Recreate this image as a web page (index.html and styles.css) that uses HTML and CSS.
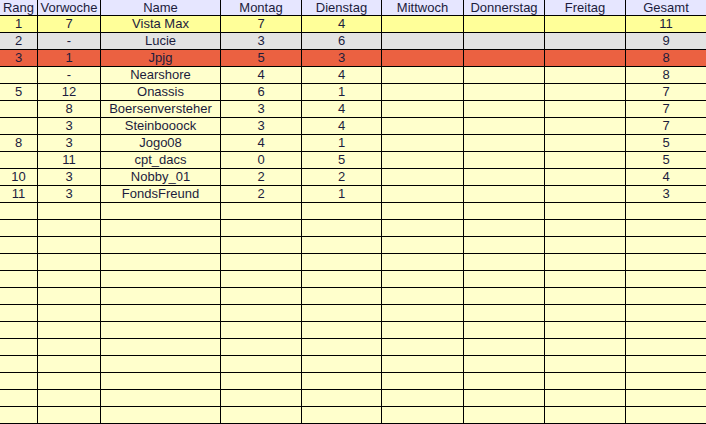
FILE: index.html
```html
<!DOCTYPE html>
<html lang="de">
<head>
<meta charset="utf-8">
<title>Rangliste</title>
<link rel="stylesheet" href="styles.css">
</head>
<body>
<div class="sheet">
  <div class="row head"><div>Rang</div><div>Vorwoche</div><div>Name</div><div>Montag</div><div>Dienstag</div><div>Mittwoch</div><div>Donnerstag</div><div>Freitag</div><div>Gesamt</div></div>
  <div class="row first"><div>1</div><div>7</div><div>Vista Max</div><div>7</div><div>4</div><div></div><div></div><div></div><div>11</div></div>
  <div class="row second"><div>2</div><div>-</div><div>Lucie</div><div>3</div><div>6</div><div></div><div></div><div></div><div>9</div></div>
  <div class="row third"><div>3</div><div>1</div><div>Jpjg</div><div>5</div><div>3</div><div></div><div></div><div></div><div>8</div></div>
  <div class="row"><div></div><div>-</div><div>Nearshore</div><div>4</div><div>4</div><div></div><div></div><div></div><div>8</div></div>
  <div class="row"><div>5</div><div>12</div><div>Onassis</div><div>6</div><div>1</div><div></div><div></div><div></div><div>7</div></div>
  <div class="row"><div></div><div>8</div><div>Boersenversteher</div><div>3</div><div>4</div><div></div><div></div><div></div><div>7</div></div>
  <div class="row"><div></div><div>3</div><div>Steinbooock</div><div>3</div><div>4</div><div></div><div></div><div></div><div>7</div></div>
  <div class="row"><div>8</div><div>3</div><div>Jogo08</div><div>4</div><div>1</div><div></div><div></div><div></div><div>5</div></div>
  <div class="row"><div></div><div>11</div><div>cpt_dacs</div><div>0</div><div>5</div><div></div><div></div><div></div><div>5</div></div>
  <div class="row"><div>10</div><div>3</div><div>Nobby_01</div><div>2</div><div>2</div><div></div><div></div><div></div><div>4</div></div>
  <div class="row"><div>11</div><div>3</div><div>FondsFreund</div><div>2</div><div>1</div><div></div><div></div><div></div><div>3</div></div>
  <div class="row"><div></div><div></div><div></div><div></div><div></div><div></div><div></div><div></div><div></div></div>
  <div class="row"><div></div><div></div><div></div><div></div><div></div><div></div><div></div><div></div><div></div></div>
  <div class="row"><div></div><div></div><div></div><div></div><div></div><div></div><div></div><div></div><div></div></div>
  <div class="row"><div></div><div></div><div></div><div></div><div></div><div></div><div></div><div></div><div></div></div>
  <div class="row"><div></div><div></div><div></div><div></div><div></div><div></div><div></div><div></div><div></div></div>
  <div class="row"><div></div><div></div><div></div><div></div><div></div><div></div><div></div><div></div><div></div></div>
  <div class="row"><div></div><div></div><div></div><div></div><div></div><div></div><div></div><div></div><div></div></div>
  <div class="row"><div></div><div></div><div></div><div></div><div></div><div></div><div></div><div></div><div></div></div>
  <div class="row"><div></div><div></div><div></div><div></div><div></div><div></div><div></div><div></div><div></div></div>
  <div class="row"><div></div><div></div><div></div><div></div><div></div><div></div><div></div><div></div><div></div></div>
  <div class="row"><div></div><div></div><div></div><div></div><div></div><div></div><div></div><div></div><div></div></div>
  <div class="row"><div></div><div></div><div></div><div></div><div></div><div></div><div></div><div></div><div></div></div>
  <div class="row"><div></div><div></div><div></div><div></div><div></div><div></div><div></div><div></div><div></div></div>
  <div class="row"><div></div><div></div><div></div><div></div><div></div><div></div><div></div><div></div><div></div></div>
</div>
</body>
</html>
```
FILE: styles.css
```css
html, body {
  margin: 0;
  padding: 0;
  overflow: hidden;
  background: #000;
}
.sheet {
  display: grid;
  grid-template-columns: 37px 62px 119px 80px 79px 81px 80px 80px 80px;
  grid-template-rows: 15px;
  grid-auto-rows: 16px;
  gap: 1px;
  background: #000;
  width: 706px;
  font-family: "Liberation Sans", Arial, sans-serif;
  font-size: 13px;
  color: #1c1c3c;
}
.row {
  display: contents;
}
.row > div {
  background: #ffffcc;
  text-align: center;
  line-height: 16px;
  white-space: nowrap;
  overflow: hidden;
}
.row.head > div {
  background: #e6e6ff;
  line-height: 15px;
}
.row.first > div {
  background: #ffff99;
}
.row.second > div {
  background: #e3e3e3;
}
.row.third > div {
  background: #eb6141;
}
```
